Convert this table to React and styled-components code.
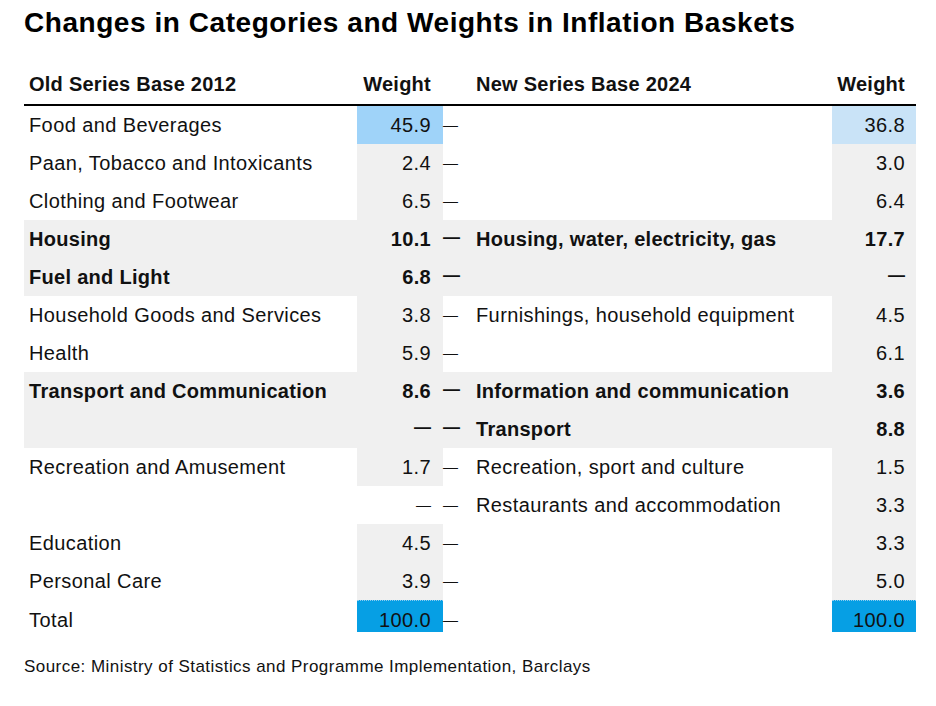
import React from "react";
import styled, { createGlobalStyle, css } from "styled-components";

const Global = createGlobalStyle`
  html, body { margin: 0; padding: 0; background: #fff; }
  body { font-family: "Liberation Sans", Arial, sans-serif; color: #111; }
`;

const COLS = "333px 86px 27px 362px 84px";

const Page = styled.div`
  width: 936px;
  height: 706px;
  box-sizing: border-box;
  padding: 5px 20px 0 24px;
`;

const Title = styled.h1`
  margin: 0;
  font-size: 28px;
  line-height: 36px;
  font-weight: 700;
  color: #000;
  letter-spacing: 0.55px;
`;

const Table = styled.div`
  margin-top: 31px;
  display: flex;
  flex-direction: column;
`;

const HeaderRow = styled.div`
  display: grid;
  grid-template-columns: ${COLS};
  height: 34px;
  box-sizing: border-box;
  padding-top: 1px;
  align-items: start;
  border-bottom: 2px solid #000;
  font-weight: 700;
  font-size: 20px;
  line-height: 23px;
  letter-spacing: 0.25px;
`;

const Row = styled.div`
  display: grid;
  grid-template-columns: ${COLS};
  height: ${(p) => (p.$total ? "32px" : "38px")};
  background: ${(p) => (p.$shaded ? "#f0f0f0" : "transparent")};
  font-weight: ${(p) => (p.$bold ? 700 : 400)};
  letter-spacing: ${(p) => (p.$bold ? "0.3px" : "0.4px")};
  font-size: 20px;
`;

const Cell = styled.div`
  display: flex;
  align-items: center;
  white-space: nowrap;
  box-sizing: border-box;
  padding-top: ${(p) => (p.$total ? "8px" : "0")};
  padding-left: ${(p) => p.$pl || 0}px;
  padding-right: ${(p) => p.$pr || 0}px;
  justify-content: ${(p) => (p.$right ? "flex-end" : "flex-start")};
  background: ${(p) => p.$bg || "transparent"};
  ${(p) =>
    p.$dotted &&
    css`
      border-top: 1px dotted #8ccbf0;
    `}
`;

const Dash = styled.span`
  font-size: ${(p) => (p.$bold ? "17px" : "15px")};
  letter-spacing: 0;
  margin-bottom: 2px;
`;

const Source = styled.div`
  margin-top: 25px;
  font-size: 17px;
  letter-spacing: 0.45px;
  color: #111;
`;

const GREY = "#f0f0f0";
const DASH = "—";
const rows = [
  { l: "Food and Beverages", lw: "45.9", r: "", rw: "36.8", lbg: "#9fd3f9", rbg: "#c9e3f7" },
  { l: "Paan, Tobacco and Intoxicants", lw: "2.4", r: "", rw: "3.0" },
  { l: "Clothing and Footwear", lw: "6.5", r: "", rw: "6.4" },
  { l: "Housing", lw: "10.1", r: "Housing, water, electricity, gas", rw: "17.7", bold: true },
  { l: "Fuel and Light", lw: "6.8", r: "", rw: DASH, bold: true },
  { l: "Household Goods and Services", lw: "3.8", r: "Furnishings, household equipment", rw: "4.5" },
  { l: "Health", lw: "5.9", r: "", rw: "6.1" },
  { l: "Transport and Communication", lw: "8.6", r: "Information and communication", rw: "3.6", bold: true },
  { l: "", lw: DASH, r: "Transport", rw: "8.8", bold: true },
  { l: "Recreation and Amusement", lw: "1.7", r: "Recreation, sport and culture", rw: "1.5" },
  { l: "", lw: DASH, r: "Restaurants and accommodation", rw: "3.3", lbg: "transparent" },
  { l: "Education", lw: "4.5", r: "", rw: "3.3" },
  { l: "Personal Care", lw: "3.9", r: "", rw: "5.0" },
  { l: "Total", lw: "100.0", r: "", rw: "100.0", lbg: "#069fe4", rbg: "#069fe4", total: true },
];

const Value = ({ v, bold }) => (v === DASH ? <Dash $bold={bold}>{DASH}</Dash> : v);

export default function App() {
  return (
    <Page>
      <Global />
      <Title>Changes in Categories and Weights in Inflation Baskets</Title>
      <Table>
        <HeaderRow>
          <Cell $pl={5}>Old Series Base 2012</Cell>
          <Cell $right $pr={12}>Weight</Cell>
          <Cell />
          <Cell $pl={6}>New Series Base 2024</Cell>
          <Cell $right $pr={11}>Weight</Cell>
        </HeaderRow>
        {rows.map((r, i) => (
          <Row key={i} $shaded={r.bold} $bold={r.bold} $total={r.total}>
            <Cell $pl={5} $total={r.total}>{r.l}</Cell>
            <Cell $right $pr={12} $total={r.total} $dotted={r.total} $bg={r.lbg || (r.bold ? "transparent" : GREY)}>
              <Value v={r.lw} bold={r.bold} />
            </Cell>
            <Cell $total={r.total}>
              <Dash $bold={r.bold}>{DASH}</Dash>
            </Cell>
            <Cell $pl={6} $total={r.total}>{r.r}</Cell>
            <Cell $right $pr={11} $total={r.total} $dotted={r.total} $bg={r.rbg || (r.bold ? "transparent" : GREY)}>
              <Value v={r.rw} bold={r.bold} />
            </Cell>
          </Row>
        ))}
      </Table>
      <Source>Source: Ministry of Statistics and Programme Implementation, Barclays</Source>
    </Page>
  );
}
